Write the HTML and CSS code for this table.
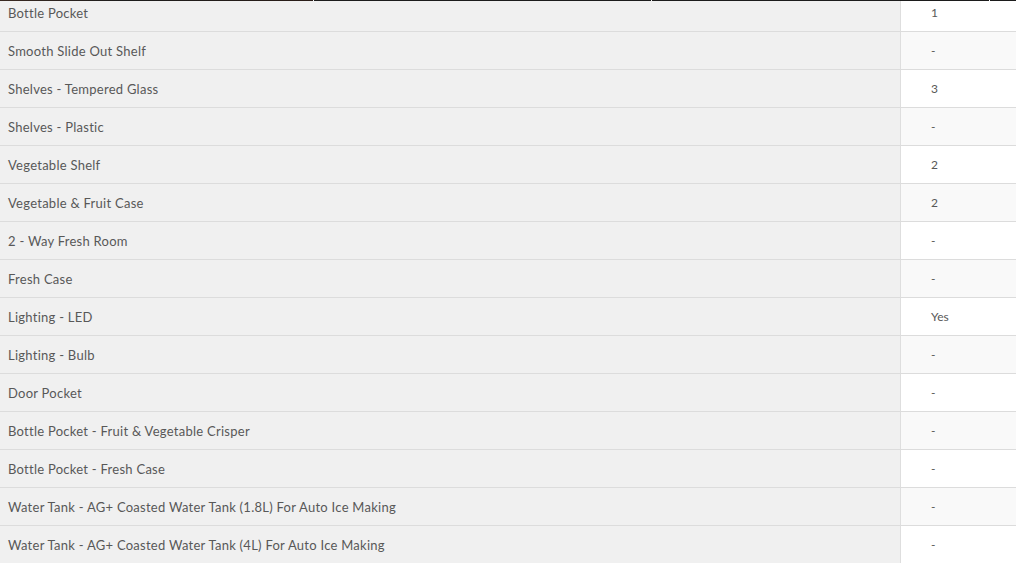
FILE: index.html
```html
<!DOCTYPE html>
<html>
<head>
<meta charset="utf-8">
<link rel="stylesheet" href="styles.css">
</head>
<body>
<div class="topline"><span class="seg seg1"></span><span class="seg"></span><span class="seg"></span><span class="seg seg4"></span></div>
<div class="spec">
  <div class="row"><div class="name">Bottle Pocket</div><div class="val">1</div></div>
  <div class="row"><div class="name">Smooth Slide Out Shelf</div><div class="val">-</div></div>
  <div class="row"><div class="name">Shelves - Tempered Glass</div><div class="val">3</div></div>
  <div class="row"><div class="name">Shelves - Plastic</div><div class="val">-</div></div>
  <div class="row"><div class="name">Vegetable Shelf</div><div class="val">2</div></div>
  <div class="row"><div class="name">Vegetable &amp; Fruit Case</div><div class="val">2</div></div>
  <div class="row"><div class="name">2 - Way Fresh Room</div><div class="val">-</div></div>
  <div class="row"><div class="name">Fresh Case</div><div class="val">-</div></div>
  <div class="row"><div class="name">Lighting - LED</div><div class="val">Yes</div></div>
  <div class="row"><div class="name">Lighting - Bulb</div><div class="val">-</div></div>
  <div class="row"><div class="name">Door Pocket</div><div class="val">-</div></div>
  <div class="row"><div class="name">Bottle Pocket - Fruit &amp; Vegetable Crisper</div><div class="val">-</div></div>
  <div class="row"><div class="name">Bottle Pocket - Fresh Case</div><div class="val">-</div></div>
  <div class="row"><div class="name">Water Tank - AG+ Coasted Water Tank (1.8L) For Auto Ice Making</div><div class="val">-</div></div>
  <div class="row"><div class="name">Water Tank - AG+ Coasted Water Tank (4L) For Auto Ice Making</div><div class="val">-</div></div>
</div>
</body>
</html>
```
FILE: styles.css
```css
html, body {
  margin: 0;
  padding: 0;
  background: #ffffff;
  overflow: hidden;
}
body {
  font-family: "Lato", "Noto Sans", sans-serif;
  font-size: 13px;
  color: #585858;
  position: relative;
}
.topline {
  position: absolute;
  top: 0;
  left: 0;
  right: 0;
  height: 1px;
  display: flex;
  gap: 1px;
  z-index: 2;
}
.seg {
  width: 337px;
  background: #1c1c1c;
}
.seg1 {
  width: 313px;
  background: linear-gradient(90deg, #3a2a22, #1c1c1c 40%, #2a1d18);
}
.seg4 {
  flex: 1;
  width: auto;
}
.spec {
  margin-top: -6px;
  display: flex;
  flex-direction: column;
}
.row {
  display: grid;
  grid-template-columns: 901px 1fr;
  height: 38px;
  border-bottom: 1px solid #dcdcdc;
  box-sizing: border-box;
}
.name {
  background: #f0f0f0;
  padding-left: 8px;
  display: flex;
  align-items: center;
  letter-spacing: 0.26px;
  border-right: 1px solid #dedede;
}
.val {
  background: #ffffff;
  padding-left: 30px;
  display: flex;
  align-items: center;
  font-size: 12px;
}
.row:nth-child(even) .val {
  background: #f9f9f9;
}
```
